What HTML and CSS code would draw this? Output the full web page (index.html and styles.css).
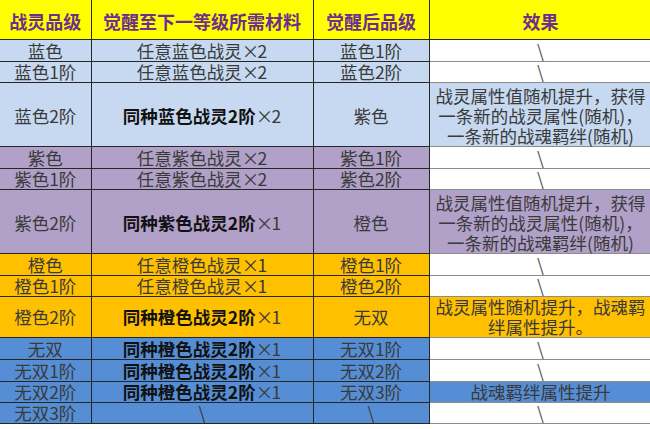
FILE: index.html
```html
<!DOCTYPE html>
<html lang="zh-CN">
<head>
<meta charset="utf-8">
<link rel="stylesheet" href="styles.css">
</head>
<body>
<div class="wrap">
<table class="grid">
  <colgroup>
    <col class="c1"><col class="c2"><col class="c3"><col class="c4">
  </colgroup>
  <thead>
    <tr class="head">
      <th>战灵品级</th><th>觉醒至下一等级所需材料</th><th>觉醒后品级</th><th class="e">效果</th>
    </tr>
  </thead>
  <tbody>
    <tr class="blue h22"><td>蓝色</td><td>任意蓝色战灵<span class="x">×</span>2</td><td>蓝色1阶</td><td class="e w">\</td></tr>
    <tr class="blue h21"><td>蓝色1阶</td><td>任意蓝色战灵<span class="x">×</span>2</td><td>蓝色2阶</td><td class="e w">\</td></tr>
    <tr class="blue h64"><td>蓝色2阶</td><td><b>同种蓝色战灵2阶</b><span class="x">×</span>2</td><td>紫色</td><td class="e multi">战灵属性值随机提升，获得<br>一条新的战灵属性(随机)，<br>一条新的战魂羁绊(随机)</td></tr>
    <tr class="purple h22"><td>紫色</td><td>任意紫色战灵<span class="x">×</span>2</td><td>紫色1阶</td><td class="e w">\</td></tr>
    <tr class="purple h21"><td>紫色1阶</td><td>任意紫色战灵<span class="x">×</span>2</td><td>紫色2阶</td><td class="e w">\</td></tr>
    <tr class="purple h64"><td>紫色2阶</td><td><b>同种紫色战灵2阶</b><span class="x">×</span>1</td><td>橙色</td><td class="e multi">战灵属性值随机提升，获得<br>一条新的战灵属性(随机)，<br>一条新的战魂羁绊(随机)</td></tr>
    <tr class="orange h22"><td>橙色</td><td>任意橙色战灵<span class="x">×</span>1</td><td>橙色1阶</td><td class="e w">\</td></tr>
    <tr class="orange h21"><td>橙色1阶</td><td>任意橙色战灵<span class="x">×</span>1</td><td>橙色2阶</td><td class="e w">\</td></tr>
    <tr class="orange h41"><td>橙色2阶</td><td><b>同种橙色战灵2阶</b><span class="x">×</span>1</td><td>无双</td><td class="e multi">战灵属性随机提升，战魂羁<br>绊属性提升。</td></tr>
    <tr class="sky h22"><td>无双</td><td><b>同种橙色战灵2阶</b><span class="x">×</span>1</td><td>无双1阶</td><td class="e w">\</td></tr>
    <tr class="sky h22"><td>无双1阶</td><td><b>同种橙色战灵2阶</b><span class="x">×</span>1</td><td>无双2阶</td><td class="e w">\</td></tr>
    <tr class="sky h21"><td>无双2阶</td><td><b>同种橙色战灵2阶</b><span class="x">×</span>1</td><td>无双3阶</td><td class="e">战魂羁绊属性提升</td></tr>
    <tr class="sky h21"><td>无双3阶</td><td>\</td><td>\</td><td class="e w">\</td></tr>
  </tbody>
</table>
</div>
</body>
</html>
```

FILE: styles.css
```css
html, body {
  margin: 0;
  padding: 0;
  background: #ffffff;
}

.wrap {
  width: 650px;
  height: 429px;
  overflow: hidden;
}

.grid {
  border-collapse: collapse;
  table-layout: fixed;
  width: 652px;
  font-family: "Noto Sans CJK SC", "Noto Sans", sans-serif;
  color: #3a3a3a;
}

.c1 { width: 91px; }
.c2 { width: 222px; }
.c3 { width: 116px; }
.c4 { width: 223px; }

.grid th,
.grid td {
  padding: 0;
  text-align: center;
  vertical-align: middle;
  white-space: nowrap;
  border: 1px solid #262626;
  font-size: 17.5px;
  line-height: 20px;
}

.grid tr > :first-child { border-left: none; }
.grid thead th { border-top: none; }

.head th {
  height: 36px;
  background: #ffff00;
  color: #6e2f8c;
  font-size: 18px;
  font-weight: 700;
  line-height: 22px;
  padding-top: 3px;
}

.h22 td { height: 20px; padding-top: 1px; }
.h21 td { height: 20px; }
.h41 td { height: 40px; }
.h64 td { height: 60px; padding-top: 3px; }
.h64 td.multi { padding-top: 2px; height: 61px; }

.blue td { background: #c6d9f0; }
.purple td { background: #b1a0c7; }
.orange td { background: #ffc000; }
.sky td { background: #558ed5; }

.grid td.e {
  border-top-color: #8c8c8c;
  border-bottom-color: #8c8c8c;
}
.grid td.w {
  background: #ffffff;
  color: #555555;
}

.grid b {
  font-weight: 700;
  color: #111111;
}

.x {
  display: inline-block;
  width: 0.9em;
  text-align: center;
}
```
